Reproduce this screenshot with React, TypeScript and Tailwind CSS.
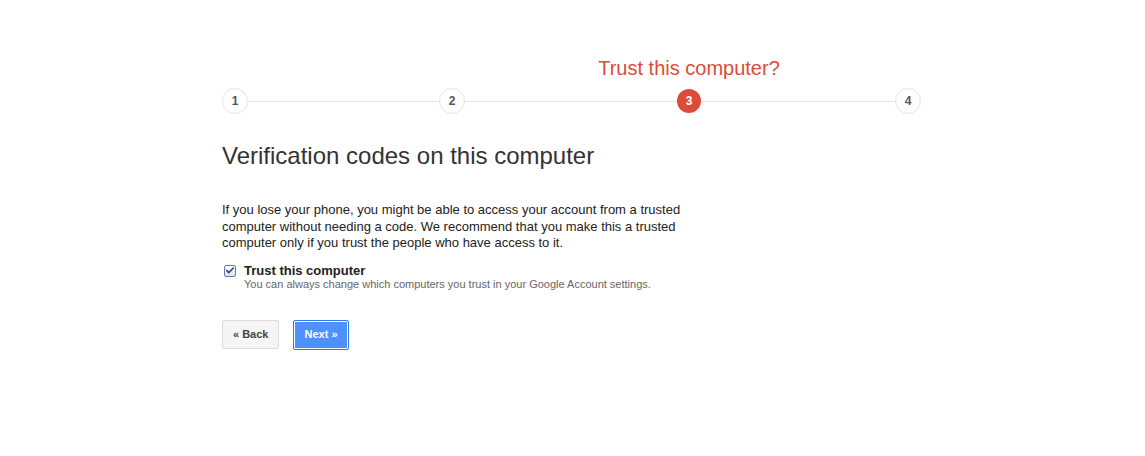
import { Check } from "lucide-react";

const steps = [1, 2, 3, 4];
const lineWidths = ["w-[191px]", "w-[212px]", "w-[194px]"];

function StepCircle({ n, active }: { n: number; active: boolean }) {
  if (active) {
    return (
      <div className="relative shrink-0">
        <div className="absolute bottom-[35px] left-1/2 -translate-x-1/2 whitespace-nowrap text-[20px] leading-none text-[#dd4b39]">
          Trust this computer?
        </div>
        <div className="w-[24px] h-[24px] rounded-full bg-[#dd4b39] text-white text-[12px] font-bold flex items-center justify-center">
          {n}
        </div>
      </div>
    );
  }
  return (
    <div className="w-[26px] h-[26px] shrink-0 rounded-full bg-white border border-[#e5e5e5] text-[#555] text-[12px] font-bold flex items-center justify-center">
      {n}
    </div>
  );
}

export default function App() {
  return (
    <div
      className="w-[1145px] h-[456px] bg-white text-[#222]"
      style={{ fontFamily: "Arial, 'Liberation Sans', sans-serif" }}
    >
      <div className="pl-[222px] pt-[88px]">
        {/* progress steps */}
        <div className="flex items-center">
          {steps.map((n, i) => (
            <div key={n} className="flex items-center">
              <StepCircle n={n} active={n === 3} />
              {i < lineWidths.length && (
                <div className={`${lineWidths[i]} h-px bg-[#e5e5e5]`} />
              )}
            </div>
          ))}
        </div>

        <h1 className="mt-[27px] text-[24px] leading-[30px] text-[#333]">
          Verification codes on this computer
        </h1>

        <p className="mt-[31px] w-[475px] text-[13px] leading-[16.5px] text-[#222]">
          If you lose your phone, you might be able to access your account from a trusted
          computer without needing a code. We recommend that you make this a trusted
          computer only if you trust the people who have access to it.
        </p>

        <div className="mt-[11px] flex items-start gap-[8px]">
          <div className="mt-[2px] ml-[2px] w-[12px] h-[12px] rounded-[2px] border border-[#6b7a99] bg-gradient-to-b from-white to-[#dde4ef] flex items-center justify-center">
            <Check className="w-[11px] h-[11px] text-[#2b4c8c]" strokeWidth={4} />
          </div>
          <div>
            <div className="text-[13px] font-bold leading-[15px] text-[#222]">Trust this computer</div>
            <div className="text-[11px] leading-[13px] text-[#666]">
              You can always change which computers you trust in your Google Account settings.
            </div>
          </div>
        </div>

        <div className="mt-[29px] flex items-center gap-[14px]">
          <button className="h-[29px] px-[10px] rounded-[2px] border border-[#dcdcdc] bg-[#f5f5f5] text-[11px] font-bold text-[#444]">
            « Back
          </button>
          <button className="h-[30px] px-[10px] rounded-[2px] border border-[#3079ed] bg-[#4d90fe] text-[11px] font-bold text-white shadow-[inset_0_0_0_1px_#fff]">
            Next »
          </button>
        </div>
      </div>
    </div>
  );
}
